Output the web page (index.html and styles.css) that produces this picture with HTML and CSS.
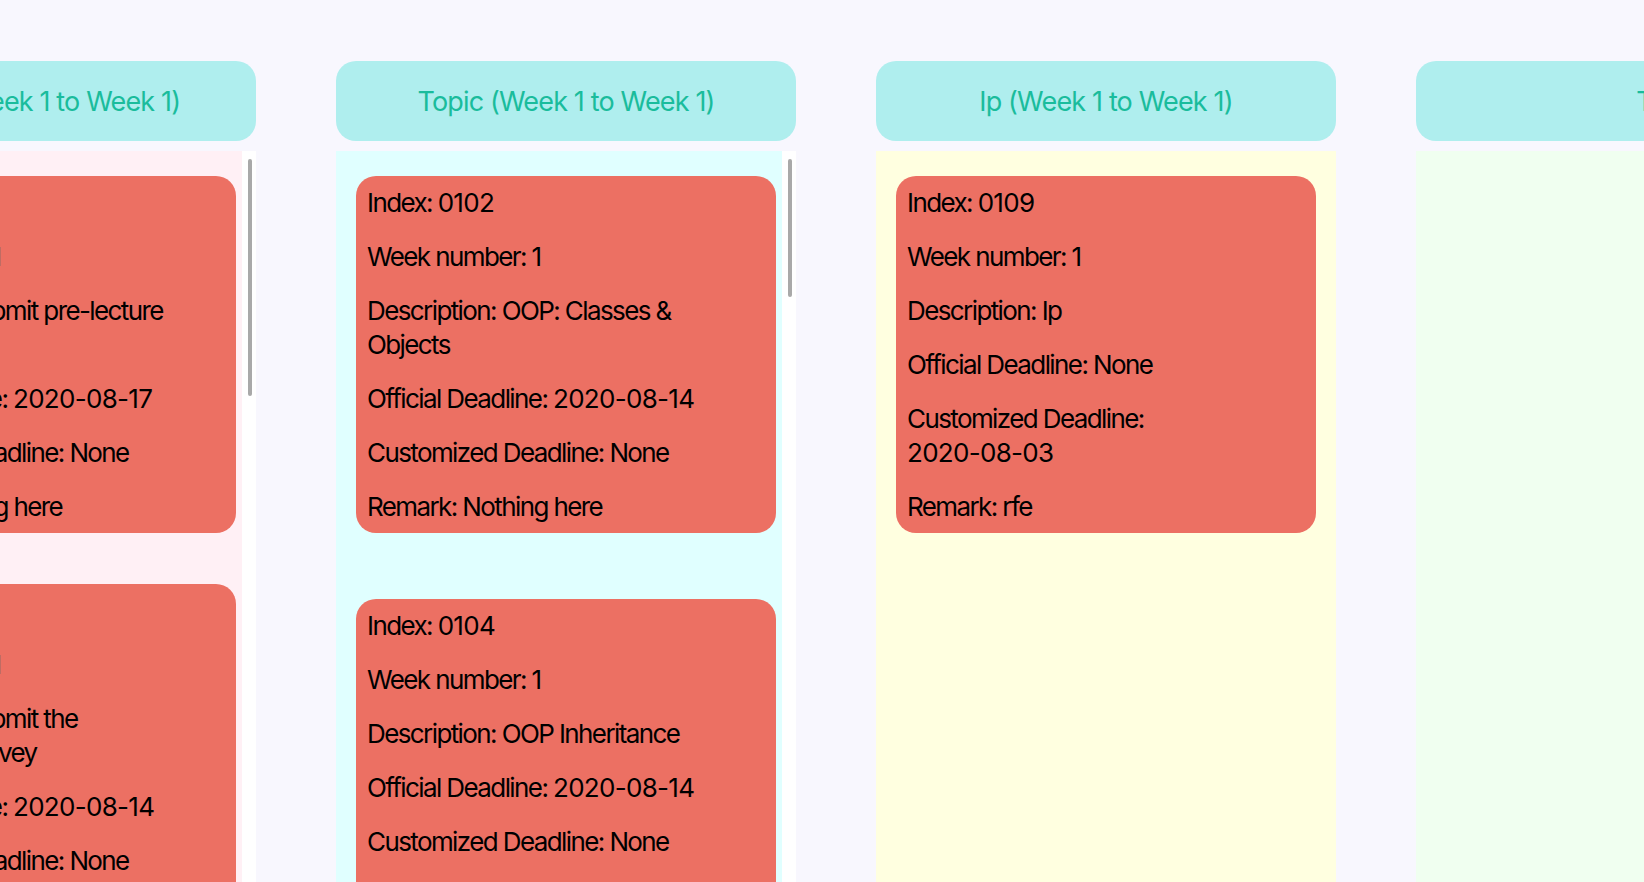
FILE: index.html
```html
<!DOCTYPE html>
<html lang="en">
<head>
<meta charset="utf-8">
<title>Task board</title>
<link rel="stylesheet" href="styles.css">
</head>
<body>
<main class="viewport">
  <div class="board">
    <section class="column column--admin">
      <header class="column-title">Admin (Week 1 to Week 1)</header>
      <div class="column-body">
        <div class="card-list card-list--tight">
          <article class="card">
            <p class="field">Index: <span class="date">0101</span></p>
            <p class="field">Week number: 1</p>
            <p class="field">Description: Submit pre-lecture questions</p>
            <p class="field">Official Deadline: <span class="date">2020-08-17</span></p>
            <p class="field">Customized Deadline: None</p>
            <p class="field">Remark: Nothing here</p>
          </article>
          <article class="card">
            <p class="field">Index: <span class="date">0103</span></p>
            <p class="field">Week number: 1</p>
            <p class="field">Description: Submit the introductory survey</p>
            <p class="field">Official Deadline: <span class="date">2020-08-14</span></p>
            <p class="field">Customized Deadline: None</p>
            <p class="field">Remark: Nothing here</p>
          </article>
        </div>
        <div class="scrollbar"><div class="thumb thumb--long"></div></div>
      </div>
    </section>

    <section class="column column--topic">
      <header class="column-title">Topic (Week 1 to Week 1)</header>
      <div class="column-body">
        <div class="card-list">
          <article class="card">
            <p class="field">Index: <span class="date">0102</span></p>
            <p class="field">Week number: 1</p>
            <p class="field">Description: OOP: Classes &amp; Objects</p>
            <p class="field">Official Deadline: <span class="date">2020-08-14</span></p>
            <p class="field">Customized Deadline: None</p>
            <p class="field">Remark: Nothing here</p>
          </article>
          <article class="card">
            <p class="field">Index: <span class="date">0104</span></p>
            <p class="field">Week number: 1</p>
            <p class="field">Description: OOP Inheritance</p>
            <p class="field">Official Deadline: <span class="date">2020-08-14</span></p>
            <p class="field">Customized Deadline: None</p>
            <p class="field">Remark: Nothing here</p>
          </article>
        </div>
        <div class="scrollbar"><div class="thumb thumb--short"></div></div>
      </div>
    </section>

    <section class="column column--ip">
      <header class="column-title">Ip (Week 1 to Week 1)</header>
      <div class="column-body">
        <div class="card-list">
          <article class="card">
            <p class="field">Index: <span class="date">0109</span></p>
            <p class="field">Week number: 1</p>
            <p class="field">Description: Ip</p>
            <p class="field">Official Deadline: None</p>
            <p class="field">Customized Deadline: <span class="date">2020-08-03</span></p>
            <p class="field">Remark: rfe</p>
          </article>
        </div>
      </div>
    </section>

    <section class="column column--tp">
      <header class="column-title">Tutorial (Week 1 to Week 1)</header>
      <div class="column-body"></div>
    </section>
  </div>
</main>
</body>
</html>
```

FILE: styles.css
```css
* {
  box-sizing: border-box;
}

html,
body {
  margin: 0;
  height: 100%;
}

body {
  background: #f8f7fe;
  font-family: Inter, "Noto Sans", "Liberation Sans", sans-serif;
  color: #000;
  overflow: hidden;
}

.viewport {
  height: 882px;
  overflow: hidden;
  padding-top: 61px;
}

.board {
  display: flex;
  gap: 80px;
  height: 100%;
  margin-left: -204px;
}

.column {
  flex: 0 0 460px;
  display: flex;
  flex-direction: column;
  gap: 10px;
}

.column--tp {
  flex-basis: 760px;
}

.column-title {
  height: 80px;
  border-radius: 20px;
  background: #afeeee;
  color: #1abc9c;
  font-size: 27px;
  letter-spacing: -0.85px;
  display: flex;
  align-items: center;
  justify-content: center;
}

.column-body {
  flex: 1;
  display: flex;
  overflow: hidden;
}

.column--admin .column-body {
  background: #fff0f5;
}

.column--topic .column-body {
  background: #e0ffff;
}

.column--ip .column-body {
  background: #ffffe0;
}

.column--tp .column-body {
  background: #f0fff0;
}

.card-list {
  flex: 1;
  display: flex;
  flex-direction: column;
  gap: 66px;
  padding: 25px 6px 0 20px;
}

.card-list--tight {
  gap: 51px;
}

.scrollbar {
  flex: 0 0 14px;
  background: #fff;
  padding: 8px 4px 0 6px;
}

.thumb {
  width: 4px;
  border-radius: 2px;
  background: #a9a9a9;
}

.thumb--long {
  height: 237px;
}

.thumb--short {
  height: 138px;
}

.card {
  width: 420px;
  border-radius: 20px;
  background: #ec7063;
  padding: 10px 36px 9px 11px;
  display: flex;
  flex-direction: column;
  gap: 20px;
}

.column--ip .card-list {
  padding-right: 20px;
}

.field {
  margin: 0;
  font-size: 26px;
  line-height: 34px;
  letter-spacing: -1.6px;
}

.date {
  white-space: nowrap;
  letter-spacing: -0.7px;
}
```
